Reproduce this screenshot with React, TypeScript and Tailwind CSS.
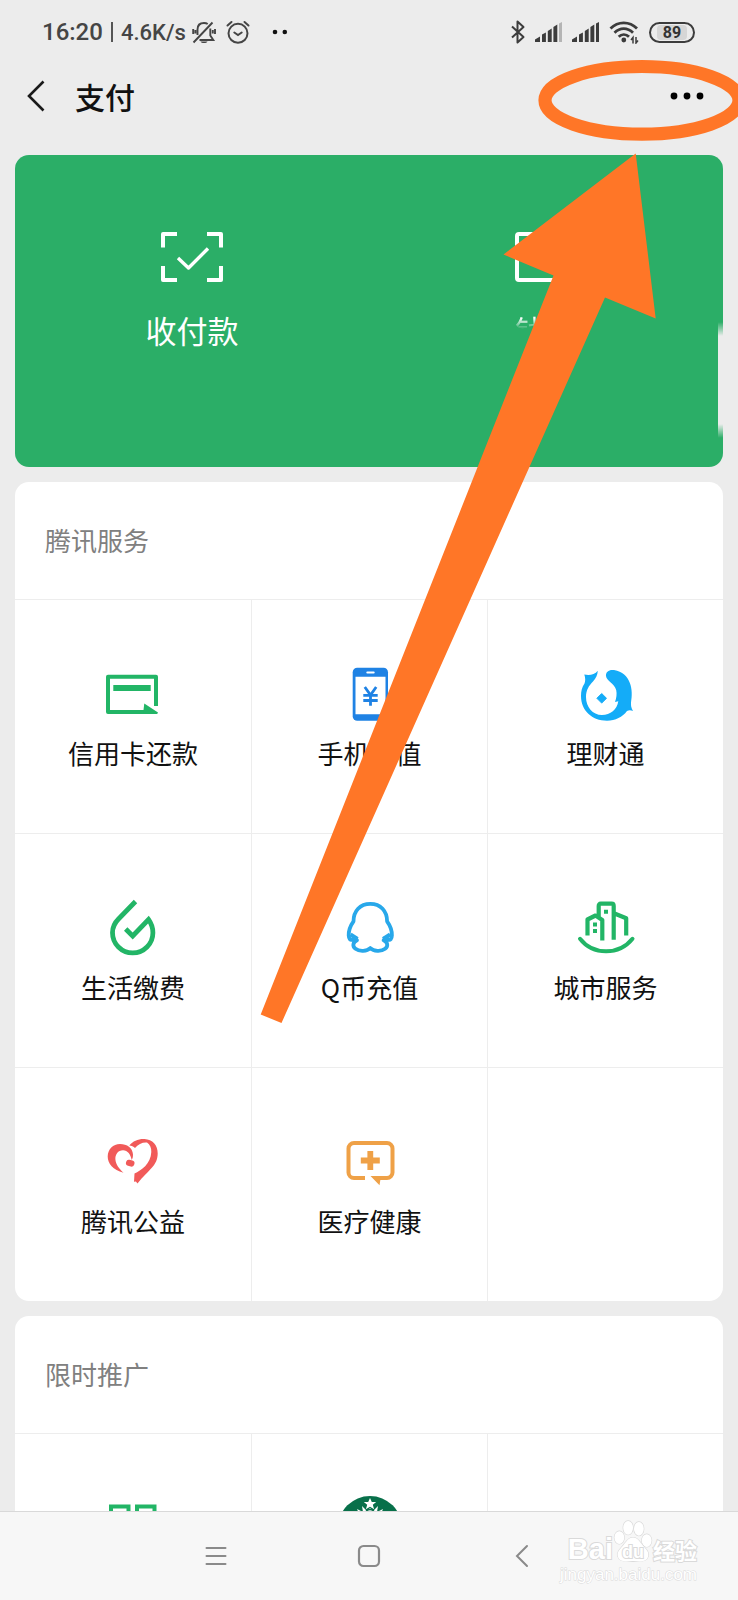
import React from 'react';

type Tile = { label: string; icon: React.ReactNode };

const GREEN = '#22b566';

function Icon({ children }: { children?: React.ReactNode }) {
  return (
    <svg viewBox="0 0 60 60" className="size-[60px] overflow-visible" fill="none" aria-hidden="true">
      {children}
    </svg>
  );
}

const CreditIcon = (
  <Icon>
    <path d="M53 41V11.700H5V47h36" stroke={GREEN} strokeWidth="4" strokeLinejoin="round" />
    <path d="M10.300 20h37.400v6H10.300zM41.300 38.500L55 47.500l-.8 1.500H40z" fill={GREEN} />
  </Icon>
);

const PhoneIcon = (
  <Icon>
    <rect x="12.700" y="2.700" width="35.300" height="53" rx="4.500" fill="#1f82e4" />
    <path d="M15.500 11.700h30v37.500h-30z" fill="#fff" />
    <path d="M27.300 7.400h6.400" stroke="#fff" strokeWidth="2" strokeLinecap="round" />
    <path d="M24.800 22l5.700 8 5.700-8M30.500 29.500v11.300M23.300 30.300h14.400M23.300 35.500h14.400" stroke="#1f82e4" strokeWidth="2.800" />
  </Icon>
);

const WealthIcon = (
  <Icon>
    <path
      d="M21.800 5.800C18.500 10 13 10.500 8.300 9.500 9.500 13 9.500 16 8.500 18.500 6 22 5 26 5 31c0 14.500 11 24.700 26 24.700 8.500 0 15.500-3.700 20-9.700 2-1.200 4-1 6 0-1.800-3-2.200-5.500-2-8.500C57.500 25 55 8 38 5c-5-.7-8.500 2-8 6 .5 5 8 7 10.200 14 .8 4 .3 8-1.200 12l3.300-.8C41 44.500 34.500 50 26 50 16.500 50 10 42 10 32c0-7 3-11.500 7-15.500 3-3 4.500-6.500 4.800-10.700z"
      fill="#14acf8"
    />
    <path d="M25.700 28.500l4.800 4.800-4.800 4.800-4.800-4.800z" fill="#14acf8" stroke="#14acf8" strokeWidth="1" strokeLinejoin="round" />
  </Icon>
);

const DropIcon = (
  <Icon>
    <path
      d="M32.500 2.500L15.500 20C11.500 24 9.500 28.500 9.500 33.700a20.200 20.200 0 0 0 40.400 0c0-5-1.400-9-4.400-13.200L29.700 37l-7-7"
      stroke={GREEN}
      strokeWidth="4.800"
    />
  </Icon>
);

const PenguinIcon = (
  <Icon>
    <path
      d="M30.300 4.800C20 4.800 13.500 12 13.500 22.300 10.500 26.500 8.500 31 8.700 36.500c.1 3.300 1.700 5 3.600 4l3.200-1.500c.3 1 .9 1.800 1.500 2.300-4.300 2-4.800 6-1.500 8.500 4 3 11.500 2.500 14.800-.7 3.300 3.200 10.800 3.700 14.800.7 3.300-2.500 2.800-6.500-1.500-8.500.6-.5 1.200-1.300 1.500-2.300l3.200 1.500c1.900 1 3.500-.7 3.600-4 .2-5.500-1.800-10-4.800-14.200C47.100 12 40.600 4.800 30.300 4.800z"
      stroke="#28a8ea"
      strokeWidth="3.800"
      strokeLinejoin="round"
    />
    <path d="M10.500 35.500l7 4.500M50.100 35.500l-7 4.500" stroke="#28a8ea" strokeWidth="4" />
  </Icon>
);

const CityIcon = (
  <Icon>
    <path d="M4 39.800C17 56.500 43 56.500 56.500 39.800" stroke={GREEN} strokeWidth="4" strokeLinecap="round" />
    <path
      d="M11.500 36.500V20.500l8-4 6.800 4.500v20.500M22.700 17.500V7c0-1.500.7-2.300 2-2.300h11c1.300 0 2 .8 2 2.300v33.700M38.500 14.500l11.700 4.800v17.200"
      stroke={GREEN}
      strokeWidth="4.200"
      strokeLinejoin="round"
    />
    <path d="M28 10.700h4v4h-4zM17 23.500h4v4h-4zM17 30h4v4h-4z" fill={GREEN} />
  </Icon>
);

const HeartIcon = (
  <Icon>
    <path
      d="M20.500 39.700C10 37 4.600 30.500 4.700 23.500 4.900 16 10 11 17 11c7 0 12.700 4 13 10.500 0 2.500-.4 4-1.300 5.500-1-5.500-4-9.800-8.700-9.800-5 0-8 4.300-7.600 9.300.4 5 3.600 9 8.100 13.200z"
      fill="#f15a59"
    />
    <path
      d="M26.300 12.500C30 8 35.500 5.800 41.500 6.100c8 .4 13.300 6 13.200 14.400C54.500 33 46 36 34.500 50.500l-1.600-2-1.900.3.500-8.300C38 37.500 47.800 31 48.300 19c.2-4-1.300-7.500-4.300-9.500-4-.5-9 1.500-12 5.500-1.500-1.500-3.500-2.300-5.700-2.500z"
      fill="#f15a59"
    />
    <rect x="23" y="27" width="8.500" height="6.200" rx="2.800" fill="#f15a59" transform="rotate(15 27 30)" />
  </Icon>
);

const MedicalIcon = (
  <Icon>
    <path
      d="M25 45H14a5.500 5.500 0 0 1-5.500-5.500V15.500A5.500 5.500 0 0 1 14 10h33a5.500 5.500 0 0 1 5.500 5.500v24A5.500 5.500 0 0 1 47 45H37"
      stroke="#efa147"
      strokeWidth="4"
    />
    <path d="M30.500 43h10.500l-1.500 9.300zM27.400 18h5.800v6.600h6.600v5.800h-6.600V37h-5.800v-6.600h-6.600v-5.800h6.600z" fill="#efa147" />
  </Icon>
);

const QrIcon = (
  <Icon>
    <path d="M8 7.500h17.500V25H8zM34 7.500h17.500V25H34zM8 34h17.500v17.500H8z" stroke={GREEN} strokeWidth="4" />
  </Icon>
);

const SirenIcon = (
  <Icon>
    <circle cx="30" cy="29" r="32" fill="#08704a" />
    <path d="M30 -1l1.800 4h4.400l-3.400 2.800 1.300 4.400L30 7.700l-4.100 2.500 1.300-4.400L23.800 3h4.400z" fill="#fff" />
    <path d="M14 17l5-2-2-5 6 3-1-6 5 5 3-3 3 3 5-5-1 6 6-3-2 5 5 2-5 5H19z" fill="#fff" />
    <path d="M26 12q4-3 8 0" stroke="#08704a" strokeWidth="1.500" />
  </Icon>
);

const services: Tile[] = [
  { label: '信用卡还款', icon: CreditIcon },
  { label: '手机充值', icon: PhoneIcon },
  { label: '理财通', icon: WealthIcon },
  { label: '生活缴费', icon: DropIcon },
  { label: 'Q币充值', icon: PenguinIcon },
  { label: '城市服务', icon: CityIcon },
  { label: '腾讯公益', icon: HeartIcon },
  { label: '医疗健康', icon: MedicalIcon },
  { label: '', icon: null },
];

const promos: Tile[] = [
  { label: '', icon: QrIcon },
  { label: '', icon: SirenIcon },
  { label: '', icon: null },
];

function Section({ title, tiles }: { title: string; tiles: Tile[] }) {
  return (
    <section className="shrink-0 overflow-hidden rounded-[14px] bg-white">
      <h2 className="flex h-[117px] items-center pb-0.5 pl-[30px] text-[26px] leading-9 text-[#808080]">{title}</h2>
      <div className="grid grid-cols-3">
        {tiles.map((tile, i) => (
          <div
            key={i}
            className="h-[234px] border-t border-l border-[#ededed] [&:nth-child(3n+1)]:border-l-0"
          >
            {tile.icon && (
              <button type="button" aria-label={tile.label || title} className="flex size-full flex-col items-center pt-[65px]">
                {tile.icon}
                <span className="mt-[10px] text-[26px] leading-9 text-[#111]">{tile.label}</span>
              </button>
            )}
          </div>
        ))}
      </div>
    </section>
  );
}

function Signal({ weak = false }: { weak?: boolean }) {
  return (
    <svg viewBox="0 0 27 20" className="h-5 w-[27px]" fill="#3c3c3c" aria-hidden="true">
      <path d="M0 20v-2.500l5-3V20zM7 20v-7.500l3.900-2V20zM12.800 20V9l3.900-2.500V20zM18.400 20V5l3.900-2.500V20z" />
      <path d="M24 20V1.500L27 0v20z" fill={weak ? '#b4b4b4' : '#3c3c3c'} />
    </svg>
  );
}

function StatusBar() {
  return (
    <div className="flex h-16 shrink-0 items-center justify-between pr-[43px] pl-[42px] text-[#454545]">
      <div className="flex items-center font-[Roboto,sans-serif]">
        <span className="text-2xl font-medium">16:20</span>
        <span className="mx-2 h-5 w-[2px] bg-[#555]" />
        <span className="text-[22px] font-medium">4.6K/s</span>
        <svg viewBox="0 0 24 24" className="ml-1.5 size-6" fill="none" stroke="#454545" strokeWidth="1.900" aria-hidden="true">
          <path d="M1.500 22.500L20.500 2.500M5.500 15V9.500C5.500 5.500 8 3 12 3c1.500 0 2.700.3 3.700 1M18.300 8.500v7l3 4.500H7.500M1.200 9v5M3.400 10v3.500M20.800 10v3.500M23 9v5" />
          <path d="M8.500 21.500h7c-1 2-6 2-7 0z" fill="#454545" stroke="none" />
        </svg>
        <svg viewBox="0 0 24 24" className="ml-2.5 size-6" fill="none" stroke="#454545" strokeWidth="2" strokeLinecap="round" aria-hidden="true">
          <circle cx="12" cy="13.300" r="9.500" />
          <path d="M8.300 12.500l3.700 2.500 3.700-2.500M1.500 5.500l4-3.500M22.500 5.500l-4-3.500" />
        </svg>
        <svg viewBox="0 0 16 6" className="ml-[22px] h-1.5 w-4" fill="#111" aria-hidden="true">
          <circle cx="3" cy="3" r="2.300" />
          <circle cx="12.800" cy="3" r="2.300" />
        </svg>
      </div>
      <div className="flex items-center gap-[10px]">
        <svg viewBox="0 0 14 24" className="h-6 w-3.5" fill="none" stroke="#3c3c3c" strokeWidth="2" strokeLinejoin="round" aria-hidden="true">
          <path d="M1 6.500l11.500 10.500L6.500 22.500v-21L12.500 7 1 17.500" />
        </svg>
        <Signal weak />
        <Signal />
        <svg viewBox="0 0 30 24" className="h-6 w-[30px]" fill="none" stroke="#3c3c3c" strokeWidth="2.800" aria-hidden="true">
          <path d="M1.500 8.500C9 1 20.500 1 28 8.500M5.500 12.800c5.500-5.500 13-5.500 18.500 0M9.700 16.800c3-3 7.300-3 10.300 0" />
          <circle cx="14.800" cy="20" r="2.400" fill="#3c3c3c" stroke="none" />
          <path d="M24 23.500v-6l-2 2.500M27 17v6l2-2.500" strokeWidth="1.500" />
        </svg>
        <div className="flex h-[21px] w-[46px] items-center justify-center rounded-full border-2 border-[#3c3c3c] px-1.5">
          <span className="w-full rounded-sm bg-[#d6d6d6] text-center font-[Roboto,sans-serif] text-base leading-[15px] font-bold text-[#333]">89</span>
        </div>
      </div>
    </div>
  );
}

function Watermark() {
  return (
    <div className="absolute top-1.5 right-[41px] flex flex-col items-end text-white [-webkit-text-stroke:2px_#dadada] [paint-order:stroke_fill]">
      <div className="flex h-[46px] items-end font-bold">
        <span className="font-['Liberation_Sans',sans-serif] text-[29px] leading-[30px]">Bai</span>
        <div className="relative h-[45px] w-[40px]">
          <svg viewBox="0 0 40 46" className="size-full" fill="#fff" stroke="#dadada" strokeWidth="1.300" aria-hidden="true">
            <ellipse cx="6" cy="19" rx="5" ry="6.500" />
            <ellipse cx="15" cy="9" rx="5" ry="7" />
            <ellipse cx="26" cy="10" rx="5" ry="7" />
            <ellipse cx="34" cy="22" rx="5" ry="6.500" />
            <path d="M20 19c5 0 6.500 4 10 8 4 4.500 6.500 7 5.500 11-1 5-6 6-15.500 5-9.500 1-14.500 0-15.500-5-1-4 1.500-6.500 5.500-11 3.500-4 5-8 10-8z" />
          </svg>
          <span className="absolute inset-x-0 bottom-0 text-center font-['Liberation_Sans',sans-serif] text-lg leading-6">du</span>
        </div>
        <span className="text-[22px] leading-[30px]">经验</span>
      </div>
      <span className="font-['Liberation_Sans',sans-serif] text-[17px] leading-[22px] [-webkit-text-stroke:1px_#dadada]">jingyan.baidu.com</span>
    </div>
  );
}

export default function App() {
  return (
    <div className="relative flex h-screen flex-col overflow-hidden bg-[#ececec] font-['Noto_Sans_CJK_SC',sans-serif]">
      <StatusBar />
      <header className="flex h-16 shrink-0 items-center pr-[34px] pl-[26px]">
        <button type="button" aria-label="返回">
          <svg viewBox="0 0 20 32" className="h-8 w-5" fill="none" stroke="#1a1a1a" strokeWidth="2.600" aria-hidden="true">
            <path d="M17.500 1.500L3 16l14.500 14.500" />
          </svg>
        </button>
        <h1 className="ml-[29px] text-[30px] leading-10 font-medium text-[#111]">支付</h1>
        <button type="button" aria-label="更多" className="ml-auto">
          <svg viewBox="0 0 34 8" className="h-2 w-[34px]" aria-hidden="true">
            <circle cx="4" cy="4" r="3.400" />
            <circle cx="17" cy="4" r="3.400" />
            <circle cx="30" cy="4" r="3.400" />
          </svg>
        </button>
      </header>

      <main className="flex min-h-0 flex-1 flex-col gap-[15px] overflow-hidden px-[15px] pt-[27px]">
        <section className="relative grid h-[312px] shrink-0 grid-cols-2 overflow-hidden rounded-[14px] bg-[#2bae67] text-white">
          <button type="button" className="flex flex-col items-center pt-[77px]">
            <svg viewBox="0 0 62 50" className="h-[50px] w-[62px]" fill="none" stroke="#fff" strokeWidth="4" strokeLinejoin="round" aria-hidden="true">
              <path d="M2 15.500V2h14M46 2h14v13.500M60 34v14H46M16 48H2V34" />
              <path d="M17 26l10.500 10L47 16.500" strokeWidth="3.400" />
            </svg>
            <span className="mt-7 text-[31px] leading-10">收付款</span>
          </button>
          <button type="button" className="flex flex-col items-center pt-[77px]">
            <svg viewBox="0 0 62 50" className="h-[50px] w-[62px]" fill="none" stroke="#fff" strokeWidth="4" aria-hidden="true">
              <rect x="2" y="2" width="58" height="46" rx="2" />
            </svg>
            <span className="mt-7 text-[31px] leading-10 [mask-image:linear-gradient(to_bottom,black_8px,transparent_19px)]">钱包</span>
          </button>
          <span className="absolute top-[167px] right-0 h-[116px] w-[5px] bg-[#ececec] [mask-image:linear-gradient(to_bottom,transparent,black_14px,black_102px,transparent)]" />
        </section>
        <Section title="腾讯服务" tiles={services} />
        <Section title="限时推广" tiles={promos} />
      </main>

      <nav className="relative flex h-[89px] shrink-0 items-center border-t border-[#d9d9d9] bg-[#f7f7f7]">
        <div className="mx-auto grid w-[62%] grid-cols-3 place-items-center">
          <button type="button" aria-label="菜单">
            <svg viewBox="0 0 22 22" className="size-[22px]" stroke="#8a8a8a" strokeWidth="2" strokeLinecap="round" aria-hidden="true">
              <path d="M1.500 3h19M1.500 11h19M1.500 19h19" />
            </svg>
          </button>
          <button type="button" aria-label="主页">
            <svg viewBox="0 0 24 24" className="size-6" fill="none" stroke="#8a8a8a" strokeWidth="2.200" aria-hidden="true">
              <rect x="2" y="2" width="20" height="20" rx="4.500" />
            </svg>
          </button>
          <button type="button" aria-label="后退">
            <svg viewBox="0 0 14 24" className="h-6 w-3.5" fill="none" stroke="#8a8a8a" strokeWidth="2" strokeLinecap="round" aria-hidden="true">
              <path d="M12 2L2 12l10 10" />
            </svg>
          </button>
        </div>
        <Watermark />
      </nav>

      <svg viewBox="0 0 738 1600" className="pointer-events-none absolute top-0 left-0 h-[1600px] w-[738px]" aria-hidden="true">
        <ellipse cx="642" cy="100.300" rx="97" ry="33.800" fill="none" stroke="#ff7627" strokeWidth="13.200" />
        <path d="M635.700 153.500L503.500 254.500 553.500 275.500 260.700 1014.500 281.500 1023 605 297.500 655.700 318.500z" fill="#ff7627" />
      </svg>
    </div>
  );
}
